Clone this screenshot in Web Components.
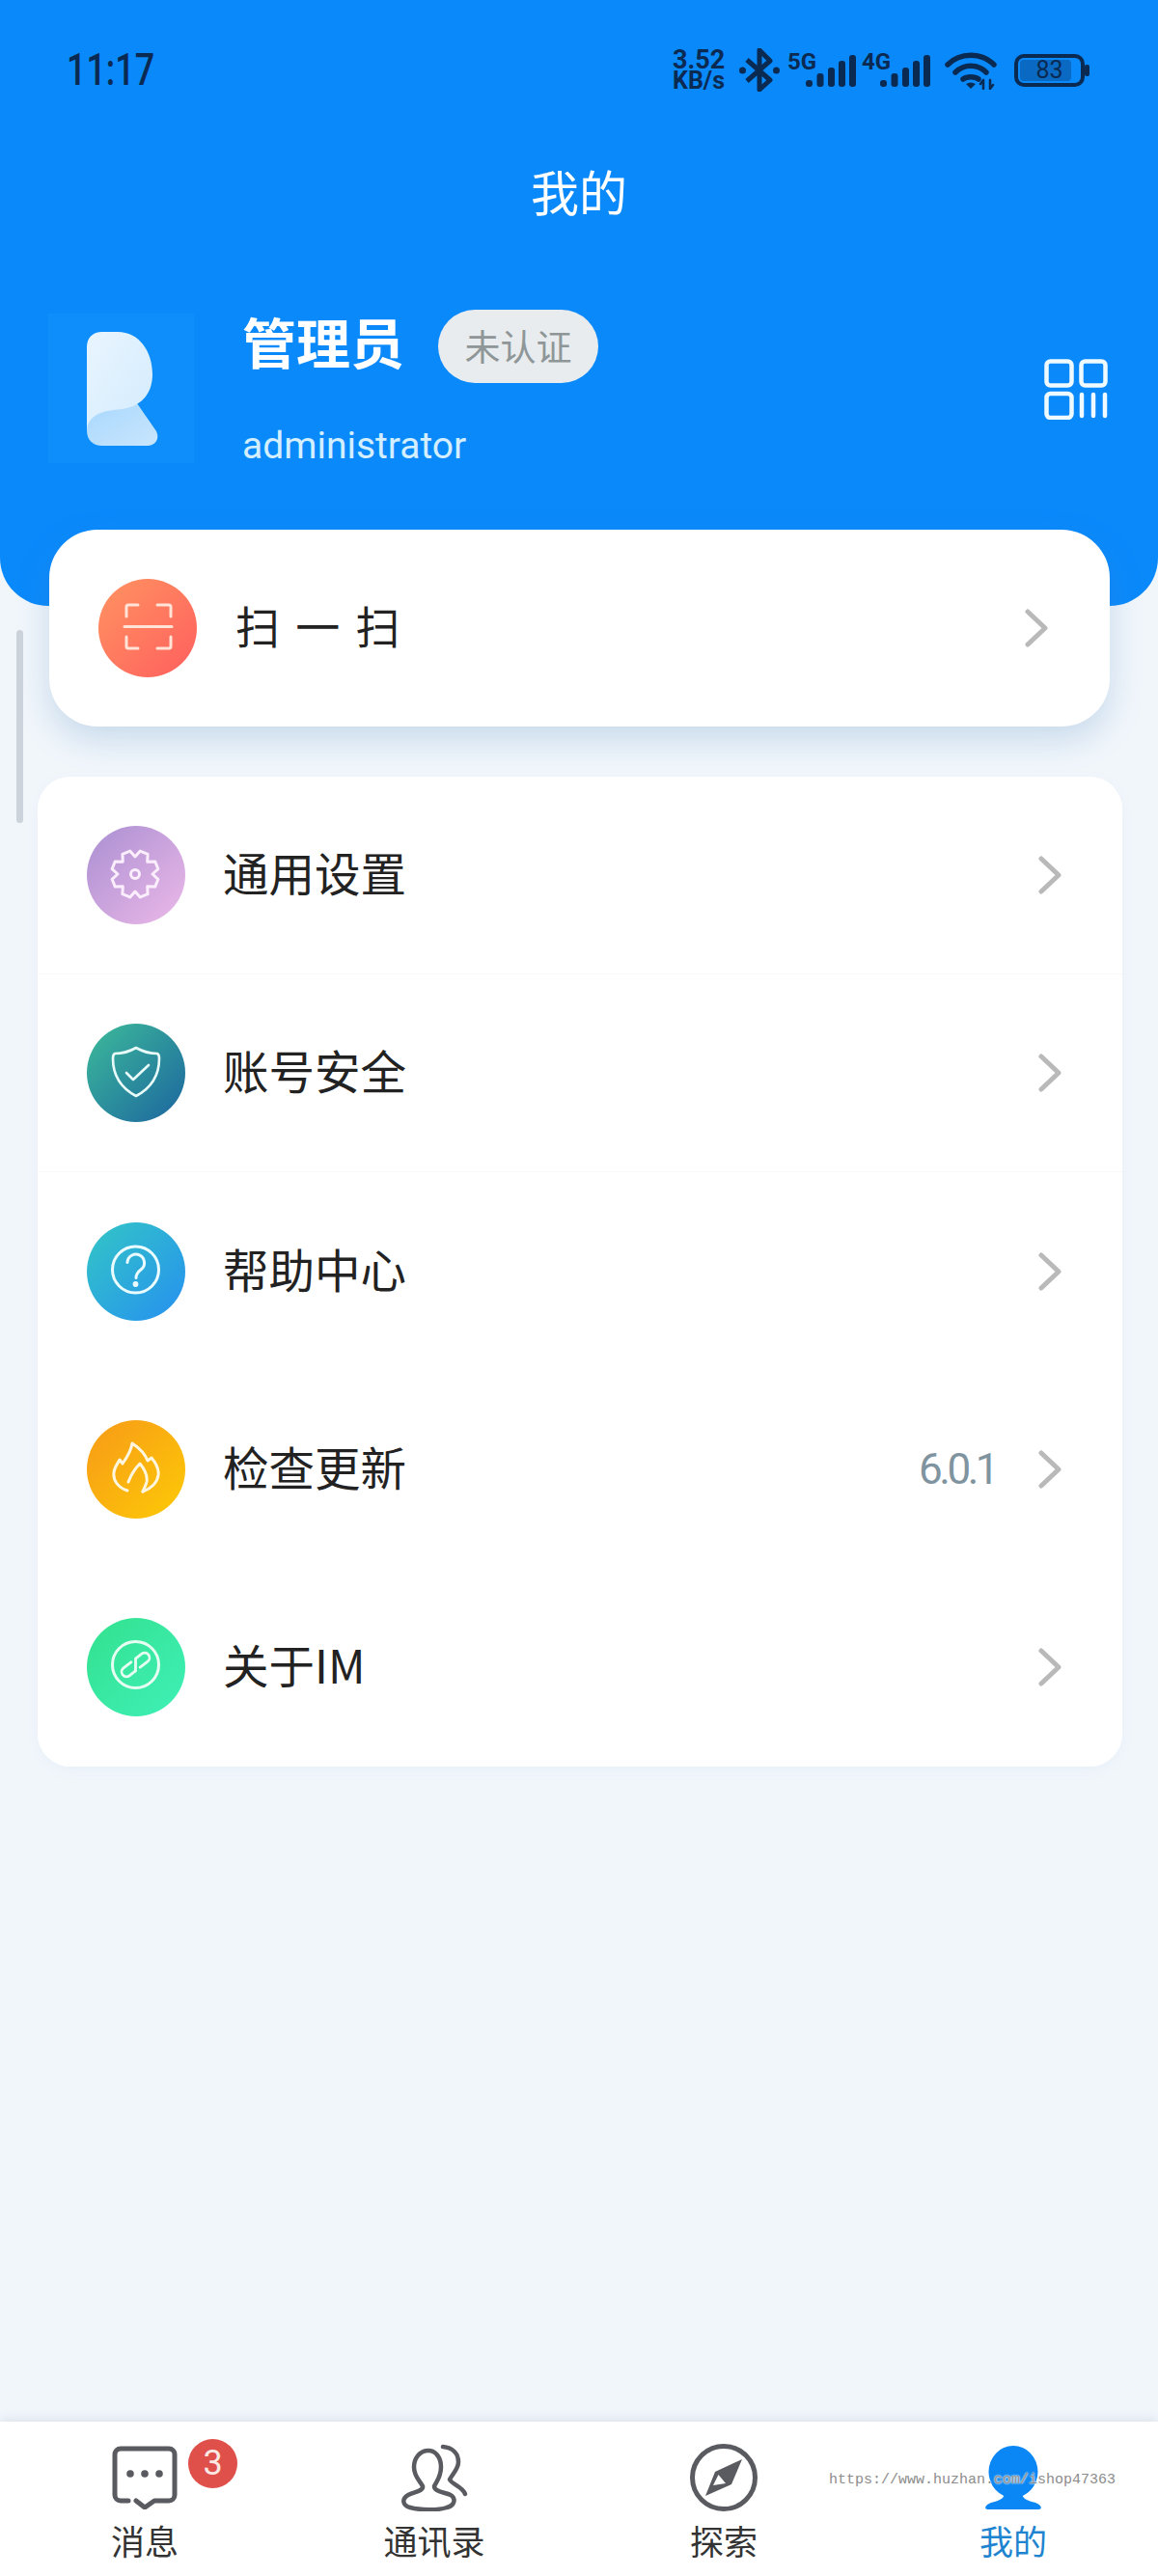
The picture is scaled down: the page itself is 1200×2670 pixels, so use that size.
<!DOCTYPE html>
<html lang="zh">
<head>
<meta charset="UTF-8">
<title>我的</title>
<style>
  html, body { margin: 0; padding: 0; }
  body { width: 1200px; height: 2670px; overflow: hidden; font-family: "Noto Sans CJK SC", Roboto, sans-serif; }
</style>
</head>
<body>
<app-shell>
  <profile-header slot="header"></profile-header>
  <menu-row slot="scan" kind="scan" from="#ff9361" to="#ff5f5e">
    <svg slot="icon" width="102" height="102" viewBox="0 0 102 102" fill="none" stroke="#ffe3d6" stroke-width="3" stroke-linecap="round" stroke-linejoin="round">
      <path d="M29 39V29a2 2 0 0 1 2-2H41M61 27H73a2 2 0 0 1 2 2V39M29 60V70a2 2 0 0 0 2 2H41M61 72H73a2 2 0 0 0 2-2V60"/>
      <path d="M27 49.500H76"/>
    </svg>
    扫 一 扫
  </menu-row>
  <menu-card slot="menu">
    <menu-row from="#aa8fd2" to="#ecb9e8" divider>
      <svg slot="icon" width="102" height="102" viewBox="0 0 102 102" fill="none" stroke="#fbeefc" stroke-width="3" stroke-linejoin="round">
        <path id="gear" d=""/>
        <circle cx="50" cy="50" r="4.500"/>
      </svg>
      通用设置
    </menu-row>
    <menu-row from="#3dbb9a" to="#1c659f" divider>
      <svg slot="icon" width="102" height="102" viewBox="0 0 102 102" fill="none" stroke="#e9fbf8" stroke-width="2.600" stroke-linecap="round" stroke-linejoin="round">
        <path d="M51 25C58 29 66 31 73 31C75 32 75 34 75 36C75 52 68 66 51 75C34 66 27 52 27 36C27 34 27 32 29 31C36 31 44 29 51 25Z"/>
        <path d="M41 51L48 58L64 43"/>
      </svg>
      账号安全
    </menu-row>
    <menu-row from="#33c6c6" to="#2690f0">
      <svg slot="icon" width="102" height="102" viewBox="0 0 102 102" fill="none" stroke="#eafcff" stroke-width="3" stroke-linecap="round">
        <circle cx="50.500" cy="49" r="24"/>
        <path d="M42 41.500a8.800 8.800 0 1 1 14 7.500c-3.500 2.600-5 4.500-5 8.500"/>
        <circle cx="50.500" cy="64" r="1.400" fill="#eafcff"/>
      </svg>
      帮助中心
    </menu-row>
    <menu-row from="#f79a18" to="#fdca06" value="6.0.1">
      <svg slot="icon" width="102" height="102" viewBox="0 0 102 102" fill="none" stroke="#fff6df" stroke-width="3" stroke-linecap="round" stroke-linejoin="round">
        <path d="M42 73C33 70 27 63 28 55C28 49 32 45 34 41L37 45C42 38 46 31 47 24C53 28 60 34 63 42L67 39C72 45 75 50 74 57C73 65 66 71 58 74"/>
        <path d="M43 64C46 56 50 50 55 45C60 51 63 58 62 64C61 68 59 71 58 74"/>
      </svg>
      检查更新
    </menu-row>
    <menu-row from="#33e18e" to="#3ff0b8">
      <svg slot="icon" width="102" height="102" viewBox="0 0 102 102" fill="none" stroke="#e6fdf2" stroke-width="3" stroke-linecap="round">
        <circle cx="50.500" cy="48.500" r="24"/>
        <g transform="translate(50.500 48.500) rotate(-38)" stroke-width="2.800">
          <path d="M-2 -5H-12a5 5 0 0 0 0 10H-4"/>
          <path d="M2 5H12a5 5 0 0 0 0-10H4"/>
          <path d="M-4 5L4 -5"/>
        </g>
      </svg>
      关于IM
    </menu-row>
  </menu-card>
  <tab-bar slot="tabs"></tab-bar>
</app-shell>

<script>
  class AppShell extends HTMLElement {
    constructor() {
      super();
      this.attachShadow({ mode: 'open' });
      this.shadowRoot.innerHTML = `
        <style>
          :host { display: flex; flex-direction: column; position: relative; width: 1200px; height: 2670px; background: #f1f6fb; }
          .scan { display: block; margin: -79px 50px 0 51px; position: relative; }
          .menu { display: block; margin: 52px 37px 0 39px; }
          .grow { flex: 1; }
          .scrollbar { position: absolute; left: 17px; top: 653px; width: 7px; height: 200px; border-radius: 4px; background: #cdd3da; }
        </style>
        <slot name="header"></slot>
        <div class="scrollbar"></div>
        <div class="scan"><slot name="scan"></slot></div>
        <div class="menu"><slot name="menu"></slot></div>
        <div class="grow"></div>
        <slot name="tabs"></slot>`;
    }
  }
  customElements.define('app-shell', AppShell);

  class SignalIcon extends HTMLElement {
    constructor() {
      super();
      this.attachShadow({ mode: 'open' });
      this.shadowRoot.innerHTML = `
        <style>
          :host { display: block; position: relative; width: 70px; height: 45px; }
          span { position: absolute; left: -1px; top: 1px; font: 700 24px/26px Roboto, sans-serif; color: #0b2a52; }
          svg { position: absolute; right: 0; top: 7px; }
        </style>
        <span>${this.getAttribute('label')}</span>
        <svg width="52" height="33" viewBox="0 0 52 33" fill="#0b2a52">
          <rect x="0" y="26" width="7" height="7" rx="3"/>
          <rect x="11.500" y="19" width="7" height="14" rx="3"/>
          <rect x="23" y="13" width="7" height="20" rx="3"/>
          <rect x="34" y="6" width="7" height="27" rx="3"/>
          <rect x="45" y="0" width="7" height="33" rx="3"/>
        </svg>`;
    }
  }
  customElements.define('signal-icon', SignalIcon);

  class StatusBar extends HTMLElement {
    constructor() {
      super();
      this.attachShadow({ mode: 'open' });
      this.shadowRoot.innerHTML = `
        <style>
          :host { display: flex; justify-content: space-between; align-items: center; height: 45px; padding: 50px 68px 0 69px; color: #0b2a52; font-family: Roboto, sans-serif; }
          .time { font-size: 46px; font-weight: 500; line-height: 45px; display: inline-block; transform: scaleX(.78); transform-origin: left; }
          .right { display: flex; align-items: center; }
          .speed { width: 56px; margin-right: 13px; font-weight: 700; text-align: left; }
          .speed div { line-height: 22px; white-space: nowrap; }
          .speed .a { font-size: 27px; }
          .speed .b { font-size: 25px; }
          .bt { margin-right: 9px; display: block; }
          signal-icon:first-of-type { margin-right: 7px; }
          .sec { margin-right: 15px; }
          .wifi { margin-right: 18px; display: block; }
          .batt { position: relative; width: 73px; height: 34px; box-sizing: border-box; border: 4px solid #0b2a52; border-radius: 10px; margin-right: 8px; }
          .batt i { position: absolute; left: 2px; top: 2px; bottom: 2px; width: 53px; border-radius: 4px; background: #0a69c2; }
          .batt span { position: absolute; inset: 0; text-align: center; font-size: 25px; line-height: 26px; font-weight: 400; }
          .nub { position: absolute; right: -9px; top: 7px; width: 5px; height: 12px; border-radius: 2px; background: #0b2a52; }
        </style>
        <span class="time">11:17</span>
        <div class="right">
          <div class="speed"><div class="a">3.52</div><div class="b">KB/s</div></div>
          <svg class="bt" width="42" height="45" viewBox="0 0 42 45" fill="none" stroke="#0b2a52" stroke-width="5" stroke-linejoin="round">
            <path d="M8 12L32 33L21 43V2L32 13L8 34"/>
            <circle cx="3.500" cy="23" r="3.500" fill="#0b2a52" stroke="none"/>
            <circle cx="38.500" cy="23" r="3.500" fill="#0b2a52" stroke="none"/>
          </svg>
          <signal-icon label="5G"></signal-icon>
          <signal-icon class="sec" label="4G"></signal-icon>
          <svg class="wifi" width="54" height="40" viewBox="0 0 54 40" fill="none" stroke="#0b2a52" stroke-width="5.500" stroke-linecap="round">
            <path d="M3 14C16 1 38 1 51 14"/>
            <path d="M11 22C20 13 34 13 43 22"/>
            <path d="M19 29C23 26 31 26 35 29"/>
            <path d="M22 34L27 39L32 34Q27 31 22 34Z" fill="#0b2a52" stroke="none"/>
            <path d="M40 30V39M37 34L40 30M47 30V39M47 39L50 35" stroke-width="2.500"/>
          </svg>
          <div class="batt"><i></i><span>83</span><div class="nub"></div></div>
        </div>`;
    }
  }
  customElements.define('status-bar', StatusBar);

  class ProfileHeader extends HTMLElement {
    constructor() {
      super();
      this.attachShadow({ mode: 'open' });
      this.shadowRoot.innerHTML = `
        <style>
          :host { display: block; height: 628px; background: #0a89fb; border-radius: 0 0 50px 50px; color: #fff; }
          h1 { margin: 72px 0 0; height: 60px; font-size: 50px; line-height: 60px; font-weight: 400; text-align: center; }
          .profile { display: flex; align-items: flex-start; margin-top: 98px; padding: 0 52px 0 50px; height: 155px; }
          .avatar { width: 151px; height: 155px; background: #0d8efb; display: flex; align-items: center; justify-content: center; flex: none; padding-top: 3px; box-sizing: border-box; }
          .info { margin-left: 50px; margin-top: -4px; flex: 1; }
          .line { display: flex; align-items: center; height: 76px; }
          .name { font-size: 56px; font-weight: 700; line-height: 76px; position: relative; top: -6px; }
          .tag { margin-left: 35px; width: 166px; height: 76px; line-height: 74px; border-radius: 38px; background: #e8ecee; color: #8f9698; font-size: 37px; text-align: center; }
          .account { margin-top: 40px; font: 400 39px/50px Roboto, sans-serif; color: #d3efff; }
          .qr { margin-top: 47px; display: block; }
        </style>
        <status-bar></status-bar>
        <h1>我的</h1>
        <div class="profile">
          <div class="avatar">
            <svg width="80" height="124" viewBox="0 0 80 124" fill="none">
              <defs>
                <linearGradient id="lg1" x1="0" y1="0" x2="1" y2="1"><stop offset="0" stop-color="#e9f5fe"/><stop offset="1" stop-color="#d3ebfe"/></linearGradient>
                <linearGradient id="lg2" x1="0" y1="0" x2="1" y2="1"><stop offset="0" stop-color="#a9d8fd"/><stop offset="1" stop-color="#c8e5fd"/></linearGradient>
              </defs>
              <path d="M4 80L56 76L76 105C80 114 74 120 66 120H20C10 120 4 114 4 104Z" fill="url(#lg2)"/>
              <path d="M4 18C4 8 10 2 20 2H36C58 2 72 22 72 46C72 68 58 80 40 82C22 84 6 86 4 104Z" fill="url(#lg1)"/>
            </svg>
          </div>
          <div class="info">
            <div class="line"><span class="name">管理员</span><span class="tag">未认证</span></div>
            <div class="account">administrator</div>
          </div>
          <svg class="qr" width="66" height="63" viewBox="0 0 66 63" fill="none" stroke="#eefaff" stroke-width="4.500" stroke-linecap="round">
            <rect x="2.500" y="2.500" width="26" height="25" rx="4"/>
            <rect x="38.500" y="2.500" width="25" height="25" rx="4"/>
            <rect x="2.500" y="36" width="26" height="25" rx="4"/>
            <path d="M39 37V59M51 37V59M63 37V59"/>
          </svg>
        </div>`;
    }
  }
  customElements.define('profile-header', ProfileHeader);

  class MenuCard extends HTMLElement {
    constructor() {
      super();
      this.attachShadow({ mode: 'open' });
      this.shadowRoot.innerHTML = `
        <style>
          :host { display: block; height: 1026px; background: #fff; border-radius: 34px; overflow: hidden; box-shadow: 0 4px 14px rgba(120,160,200,.06); }
        </style>
        <slot></slot>`;
    }
  }
  customElements.define('menu-card', MenuCard);

  class MenuRow extends HTMLElement {
    constructor() {
      super();
      this.attachShadow({ mode: 'open' });
      const scan = this.getAttribute('kind') === 'scan';
      const value = this.getAttribute('value');
      this.shadowRoot.innerHTML = `
        <style>
          :host { display: flex; align-items: center; box-sizing: border-box; height: ${scan ? 204 : 205.2}px; padding: 0 ${scan ? 64 : 63}px 0 51px; background: #fff; color: #222; }
          :host([divider]) { border-bottom: 1px solid #f6f8fa; }
          :host([kind="scan"]) { border-radius: 50px; box-shadow: 0 14px 34px rgba(70,130,190,.24); }
          .dot { width: 102px; height: 102px; border-radius: 50%; flex: none; background: linear-gradient(135deg, ${this.getAttribute('from')}, ${this.getAttribute('to')}); }
          .dot ::slotted(svg) { display: block; }
          .label { margin-left: ${scan ? 40 : 39}px; margin-bottom: ${scan ? 8 : 6}px; flex: 1; font-size: ${scan ? 46 : 47.500}px; line-height: 60px; word-spacing: ${scan ? 6 : 0}px; }
          .value { font: 400 44px/50px Roboto, sans-serif; color: #7f949f; margin-right: 44px; letter-spacing: -3.500px; }
          .chev { display: block; flex: none; }
        </style>
        <div class="dot"><slot name="icon"></slot></div>
        <div class="label"><slot></slot></div>
        ${value ? `<span class="value">${value}</span>` : ''}
        <svg class="chev" width="24" height="40" viewBox="0 0 24 40" fill="none" stroke="#b9b9b9" stroke-width="5" stroke-linecap="round" stroke-linejoin="round"><path d="M3 3L21 20L3 37"/></svg>`;
    }
  }
  customElements.define('menu-row', MenuRow);

  class TabItem extends HTMLElement {
    constructor() {
      super();
      this.attachShadow({ mode: 'open' });
      this.shadowRoot.innerHTML = `
        <style>
          :host { display: flex; flex-direction: column; align-items: center; flex: 1; position: relative; color: #333; }
          :host([active]) { color: #1e84d0; }
          .icon { height: 70px; margin-top: 23px; display: flex; align-items: center; justify-content: center; }
          .label { margin-top: 8px; font-size: 35px; line-height: 44px; }
          .badge { position: absolute; left: 195px; top: 18px; width: 51px; height: 51px; border-radius: 50%; background: #de5049; color: #fbe8e4; font: 400 36px/51px Roboto, sans-serif; text-align: center; }
        </style>
        <div class="icon"><slot></slot></div>
        <div class="label">${this.getAttribute('label')}</div>
        ${this.hasAttribute('badge') ? `<div class="badge">${this.getAttribute('badge')}</div>` : ''}`;
    }
  }
  customElements.define('tab-item', TabItem);

  class TabBar extends HTMLElement {
    constructor() {
      super();
      this.attachShadow({ mode: 'open' });
      this.shadowRoot.innerHTML = `
        <style>
          :host { display: flex; position: relative; height: 160px; background: #fff; box-shadow: 0 -3px 10px rgba(90,110,130,.12); }
          .mark { position: absolute; left: 859px; top: 52px; font: 400 15px/18px "Liberation Mono", monospace; color: #8c8c8c; text-shadow: 0 0 2px #fff, 0 0 2px #fff; white-space: nowrap; }
        </style>
        <tab-item label="消息" badge="3">
          <svg width="68" height="66" viewBox="0 0 68 66" fill="none" stroke="#5a5b60" stroke-width="5" stroke-linecap="round" stroke-linejoin="round">
            <path d="M17 57H9a6 6 0 0 1-6-6V9a6 6 0 0 1 6-6H59a6 6 0 0 1 6 6V51a6 6 0 0 1-6 6H44L34 64L25 57"/>
            <g fill="#5a5b60" stroke="none"><circle cx="19" cy="29" r="3.800"/><circle cx="34" cy="29" r="3.800"/><circle cx="49" cy="29" r="3.800"/></g>
          </svg>
        </tab-item>
        <tab-item label="通讯录">
          <svg width="70" height="70" viewBox="0 0 70 70" fill="none" stroke="#5a5b60" stroke-width="4.500" stroke-linecap="round" stroke-linejoin="round">
            <path d="M29 7C20 7 14 15 14 24C14 34 20 38 23 44C24 49 14 50 8 53C1 57 2 64 10 66C20 69 40 69 48 66C56 64 58 57 52 53C46 50 35 50 35 44C38 38 42 34 42 24C42 15 37 7 29 7Z"/>
            <path d="M44 3C54 4 60 10 60 19C60 26 54 31 51 37C53 42 64 44 67 52"/>
          </svg>
        </tab-item>
        <tab-item label="探索">
          <svg width="70" height="70" viewBox="0 0 70 70">
            <circle cx="35" cy="35" r="32.500" fill="none" stroke="#5a5b60" stroke-width="5"/>
            <path d="M54 16L43 42L16 54L26 29Z" fill="#5a5b60"/>
            <path d="M29.500 32L37 41L24 43Z" fill="#fff"/>
          </svg>
        </tab-item>
        <tab-item label="我的" active>
          <svg width="62" height="68" viewBox="0 0 62 68" fill="#0a87f5">
            <ellipse cx="31" cy="28" rx="25.500" ry="27"/>
            <path d="M22 50C22 56 16 58 8 60C2 62 0 67 5 67H57C62 67 60 62 54 60C46 58 40 56 40 50Z"/>
          </svg>
        </tab-item>
        <div class="mark">https://www.huzhan.com/ishop47363</div>`;
    }
  }
  customElements.define('tab-bar', TabBar);

  // gear outline, 8 teeth, first one a bit off the top like the reference
  const pts = [];
  for (let i = 0; i < 8; i++) {
    const a = (i * 45 - 90 + 22.5) * Math.PI / 180;
    const step = 45 * Math.PI / 180;
    [[-.5, 18], [-.22, 24.5], [.22, 24.5], [.5, 18]].forEach(([k, r]) => {
      const t = a + k * step;
      pts.push((50 + r * Math.cos(t)).toFixed(1) + ' ' + (50 + r * Math.sin(t)).toFixed(1));
    });
  }
  document.getElementById('gear').setAttribute('d', 'M' + pts.join('L') + 'Z');
</script>
</body>
</html>
